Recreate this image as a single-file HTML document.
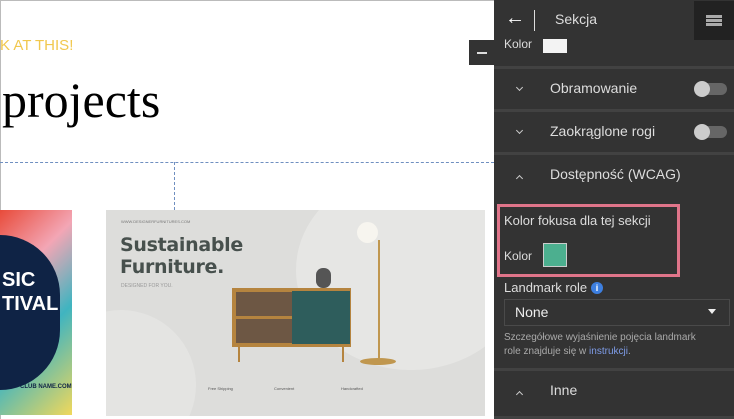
<!DOCTYPE html><html><head><style>
*{margin:0;padding:0;box-sizing:border-box}
body{width:734px;height:419px;overflow:hidden;background:#fff;font-family:"Liberation Sans",sans-serif;position:relative}
.a{position:absolute}
.p{background:#333;color:#ddd;font-size:14px}
.sep{position:absolute;left:494px;width:240px;height:3px;background:#424242}
.tg{position:absolute;width:32px;height:12px;border-radius:6px;background:#666}
.tg:before{content:"";position:absolute;left:-1px;top:-2px;width:16px;height:16px;border-radius:8px;background:#ccc}
.chev{position:absolute;width:6px;height:6px;border-right:1.5px solid #ccc;border-bottom:1.5px solid #ccc}
</style></head><body>
<div class="a" style="left:0;top:0;width:494px;height:1px;background:#bbb"></div>
<div class="a" style="left:0;top:0;width:1px;height:419px;background:#bbb"></div>
<div class="a" style="left:0;top:37px;font-size:15px;color:#f1c84e">K AT THIS!</div>
<div class="a" style="left:2px;top:70px;font-family:'Liberation Serif',serif;font-size:50px;color:#000;line-height:60px">projects</div>
<div class="a" style="left:469px;top:40px;width:25px;height:25px;background:#333"><div class="a" style="left:8px;top:12px;width:10px;height:2px;background:#ddd"></div></div>
<div class="a" style="left:0;top:162px;width:494px;border-top:1px dashed #6f8fc0"></div>
<div class="a" style="left:174px;top:162px;height:48px;border-left:1px dashed #6f8fc0"></div>
<div class="a" style="left:0;top:210px;width:72px;height:205px;overflow:hidden;background:linear-gradient(135deg,#e84b3a,#f3a6b5 30%,#3fb4c0 60%,#f1d85b);">
<div class="a" style="left:-10px;top:25px;width:70px;height:155px;border-radius:0 60px 60px 0;background:#0f2345"></div>
<div class="a" style="left:2px;top:58px;color:#fff;font:bold 20px 'Liberation Sans Narrow','Liberation Sans',sans-serif;line-height:24px">SIC<br>TIVAL</div>
<div class="a" style="left:20px;top:174px;color:#0f2345;font:bold 6px sans-serif;white-space:nowrap">CLUB NAME.COM</div>
</div>
<div class="a" style="left:106px;top:210px;width:379px;height:206px;background:#dddddb;overflow:hidden">
<div class="a" style="left:190px;top:-40px;width:230px;height:200px;border-radius:50%;background:#e6e6e4"></div>
<div class="a" style="left:-60px;top:100px;width:150px;height:150px;border-radius:50%;background:#e4e4e2"></div>
<div class="a" style="left:15px;top:9px;font-size:4px;color:#777;white-space:nowrap">WWW.DESIGNERFURNITURES.COM</div>
<div class="a" style="left:14px;top:24px;font:bold 19px 'DejaVu Sans',sans-serif;color:#47504d;line-height:22px;white-space:nowrap;letter-spacing:-0.3px">Sustainable<br>Furniture.</div>
<div class="a" style="left:15px;top:73px;font-size:5px;color:#999;white-space:nowrap">DESIGNED FOR YOU.</div>
<div class="a" style="left:126px;top:78px;width:119px;height:59px;background:#b5843f"></div>
<div class="a" style="left:130px;top:82px;width:56px;height:51px;background:#6d5744"></div>
<div class="a" style="left:186px;top:81px;width:58px;height:53px;background:#2e5d5c"></div>
<div class="a" style="left:130px;top:106px;width:56px;height:3px;background:#b5843f"></div>
<div class="a" style="left:132px;top:137px;width:2px;height:15px;background:#b5843f"></div>
<div class="a" style="left:236px;top:137px;width:2px;height:15px;background:#b5843f"></div>
<div class="a" style="left:210px;top:58px;width:15px;height:20px;border-radius:7px;background:#555"></div>
<div class="a" style="left:251px;top:12px;width:21px;height:21px;border-radius:50%;background:#f7f5ef"></div>
<div class="a" style="left:272px;top:30px;width:2px;height:122px;background:#c0974f"></div>
<div class="a" style="left:254px;top:148px;width:36px;height:7px;border-radius:50%;background:#c0974f"></div>
<div class="a" style="left:102px;top:176px;font-size:4px;color:#555;white-space:nowrap">Free Shipping</div>
<div class="a" style="left:168px;top:176px;font-size:4px;color:#555;white-space:nowrap">Convenient</div>
<div class="a" style="left:235px;top:176px;font-size:4px;color:#555;white-space:nowrap">Handcrafted</div>
</div>
<div class="a p" style="left:494px;top:0;width:240px;height:419px"></div>
<div class="a" style="left:505px;top:8px;color:#fff;font-size:20px;line-height:20px">&#8592;</div>
<div class="a" style="left:534px;top:10px;width:1px;height:21px;background:#ddd"></div>
<div class="a" style="left:555px;top:11px;color:#ddd;font-size:14px">Sekcja</div>
<div class="a" style="left:694px;top:1px;width:40px;height:39px;background:#222"><div class="a" style="left:12px;top:14px;width:16px;height:12px;background:repeating-linear-gradient(#aaa 0 3px,transparent 3px 4px)"></div></div>
<div class="a" style="left:504px;top:37px;color:#ddd;font-size:12px">Kolor</div>
<div class="a" style="left:543px;top:39px;width:24px;height:14px;background:#f3f3f3"></div>
<div class="sep" style="top:66px"></div><div class="sep" style="top:109px"></div><div class="sep" style="top:152px"></div><div class="sep" style="top:368px"></div>
<div class="chev" style="left:517px;top:85px;transform:rotate(45deg);width:5px;height:5px"></div><div class="a" style="left:550px;top:80px;color:#ddd;font-size:14px">Obramowanie</div><div class="tg" style="left:695px;top:83px"></div>
<div class="chev" style="left:517px;top:128px;transform:rotate(45deg);width:5px;height:5px"></div><div class="a" style="left:550px;top:123px;color:#ddd;font-size:14px">Zaokrąglone rogi</div><div class="tg" style="left:695px;top:126px"></div>
<div class="chev" style="left:517px;top:176px;transform:rotate(-135deg);width:5px;height:5px"></div><div class="a" style="left:550px;top:166px;color:#ddd;font-size:14px">Dostępność (WCAG)</div>
<div class="a" style="left:497px;top:204px;width:183px;height:73px;border:3px solid #e0758a"></div>
<div class="a" style="left:504px;top:213px;color:#ddd;font-size:13px">Kolor fokusa dla tej sekcji</div>
<div class="a" style="left:504px;top:249px;color:#ddd;font-size:12px">Kolor</div>
<div class="a" style="left:543px;top:243px;width:24px;height:24px;background:#4caf8f;border:1px solid #ccc"></div>
<div class="a" style="left:504px;top:280px;color:#ddd;font-size:13px">Landmark role</div>
<div class="a" style="left:591px;top:282px;width:12px;height:12px;border-radius:6px;background:#3d7fe0;color:#fff;font:bold 9px sans-serif;text-align:center;line-height:12px">i</div>
<div class="a" style="left:504px;top:299px;width:226px;height:27px;border:1px solid #4a4a4a"></div>
<div class="a" style="left:515px;top:304px;color:#eee;font-size:14px">None</div>
<div class="a" style="left:708px;top:309px;width:0;height:0;border:4px solid transparent;border-top:5px solid #eee"></div>
<div class="a" style="left:504px;top:331px;color:#aaa;font-size:10px;line-height:14px;white-space:nowrap">Szczegółowe wyjaśnienie pojęcia landmark<br>role znajduje się w <span style="color:#7e9ce8">instrukcji</span>.</div>
<div class="chev" style="left:517px;top:392px;transform:rotate(-135deg);width:5px;height:5px"></div><div class="a" style="left:550px;top:382px;color:#ddd;font-size:14px">Inne</div>
<div class="a" style="left:494px;top:416px;width:240px;height:3px;background:#424242"></div>
</body></html>
